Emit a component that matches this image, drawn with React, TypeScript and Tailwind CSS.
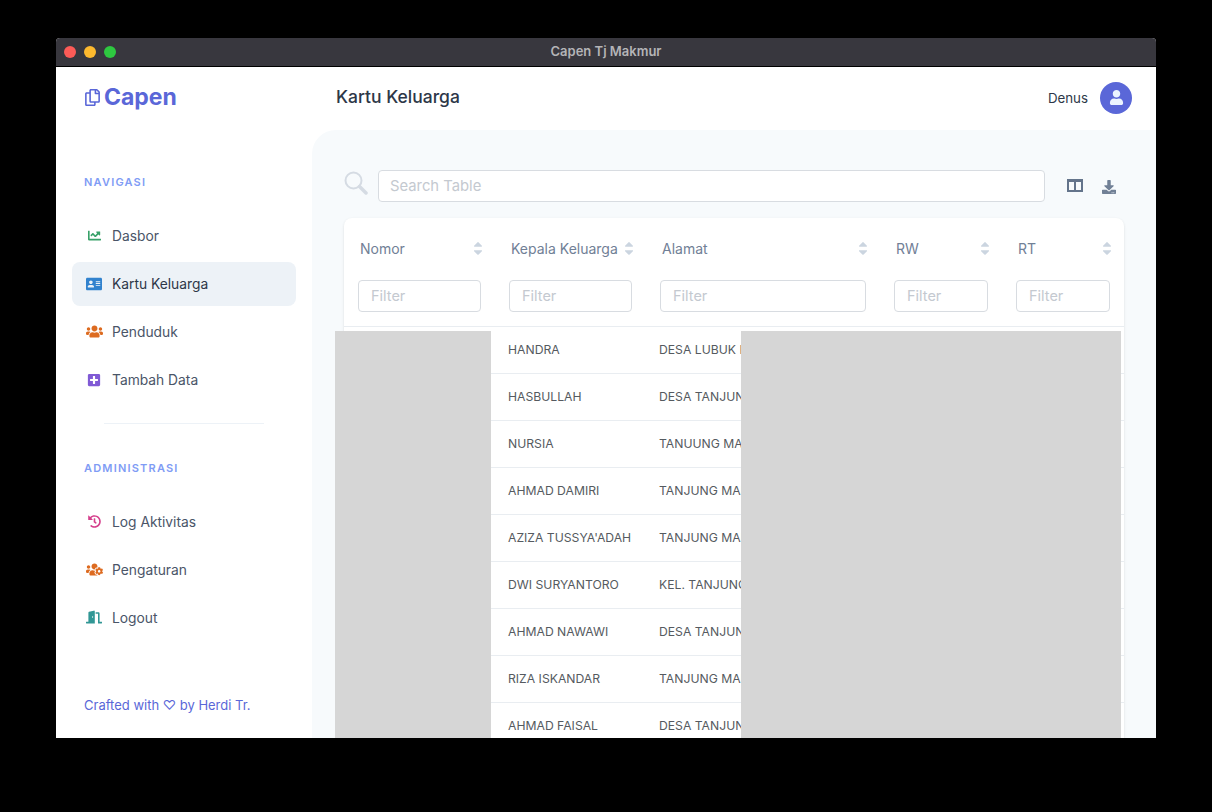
import React from 'react';
import {
  FaAddressCard,
  FaCaretDown,
  FaCaretUp,
  FaChartLine,
  FaDoorOpen,
  FaDownload,
  FaHistory,
  FaPlusSquare,
  FaRegCopy,
  FaUser,
  FaUsers,
  FaUsersCog,
} from 'react-icons/fa';

const font = { fontFamily: 'Inter, sans-serif' };

const mainNav = [
  { label: 'Dasbor', icon: <FaChartLine size={13} className="text-[#38a169]" /> },
  { label: 'Kartu Keluarga', icon: <FaAddressCard size={16} className="text-[#3182ce]" />, active: true },
  { label: 'Penduduk', icon: <FaUsers size={17} className="text-[#dd6b20]" /> },
  { label: 'Tambah Data', icon: <FaPlusSquare size={14} className="text-[#805ad5]" /> },
];

const adminNav = [
  { label: 'Log Aktivitas', icon: <FaHistory size={13} className="text-[#d53f8c]" /> },
  { label: 'Pengaturan', icon: <FaUsersCog size={17} className="text-[#dd6b20]" /> },
  { label: 'Logout', icon: <FaDoorOpen size={16} className="text-[#319795]" /> },
];

const columns = [
  { label: 'Nomor', width: 'w-[151px]' },
  { label: 'Kepala Keluarga', width: 'w-[151px]' },
  { label: 'Alamat', width: 'w-[234px]' },
  { label: 'RW', width: 'w-[122px]' },
  { label: 'RT', width: 'w-[122px]' },
];

const rows = [
  ['HANDRA', 'DESA LUBUK KAMPUNG'],
  ['HASBULLAH', 'DESA TANJUNG MAKMUR'],
  ['NURSIA', 'TANUUNG MAKMUR'],
  ['AHMAD DAMIRI', 'TANJUNG MAKMUR'],
  ["AZIZA TUSSYA'ADAH", 'TANJUNG MAKMUR'],
  ['DWI SURYANTORO', 'KEL. TANJUNG MAKMUR'],
  ['AHMAD NAWAWI', 'DESA TANJUNG MAKMUR'],
  ['RIZA ISKANDAR', 'TANJUNG MAKMUR'],
  ['AHMAD FAISAL', 'DESA TANJUNG MAKMUR'],
];

const NavItem: React.FC<{ label: string; icon: React.ReactNode; active?: boolean }> = ({ label, icon, active }) => (
  <div className={`flex h-11 items-center rounded-lg pl-3 ${active ? 'bg-[#edf2f7] text-[#2d3748]' : 'text-[#4a5568]'}`}>
    <span className="flex w-5 shrink-0 items-center justify-center">{icon}</span>
    <span className="ml-2 pt-[2px] text-[13.8px]">{label}</span>
  </div>
);

const SortCaret = () => (
  <span className="-mr-[6px] flex flex-col items-center text-[#cbd5e0]">
    <FaCaretUp size={14} className="-mb-[6px]" />
    <FaCaretDown size={14} />
  </span>
);

export default function App() {
  return (
    <div className="flex h-[812px] w-[1212px] bg-black pl-14 pt-[38px]" style={font}>
      <div className="relative h-[700px] w-[1100px] overflow-hidden rounded-t-[4px] bg-white">
        <div className="relative flex h-[29px] items-center justify-center border-b border-black bg-[#38373e]">
          <div className="absolute left-2 flex gap-2">
            <span className="h-3 w-3 rounded-full bg-[#fc5b57]" />
            <span className="h-3 w-3 rounded-full bg-[#fdb92e]" />
            <span className="h-3 w-3 rounded-full bg-[#2ec840]" />
          </div>
          <span className="text-[13px] font-semibold text-[#b4b4b7]">Capen Tj Makmur</span>
        </div>

        <div className="flex h-[671px]">
          <aside className="flex w-64 shrink-0 flex-col px-4">
            <div className="flex h-[63px] items-center pb-[2px] pl-3 text-[#5a67d8]">
              <FaRegCopy size={17} />
              <span className="ml-[3px] text-[23px] font-bold">Capen</span>
            </div>
            <p className="mt-[44px] pl-3 text-[11px] font-semibold tracking-[1.2px] text-[#7f9cf5]">NAVIGASI</p>
            <nav className="mt-[23px] flex flex-col gap-1">
              {mainNav.map((item) => (
                <NavItem key={item.label} {...item} />
              ))}
            </nav>
            <div className="mx-8 mt-[21px] border-t border-[#edf2f7]" />
            <p className="mt-[36px] pl-3 text-[11px] font-semibold tracking-[1.2px] text-[#7f9cf5]">ADMINISTRASI</p>
            <nav className="mt-[23px] flex flex-col gap-1">
              {adminNav.map((item) => (
                <NavItem key={item.label} {...item} />
              ))}
            </nav>
            <p className="mt-[57px] pl-3 text-[13px] text-[#5a67d8]">Crafted with ♡ by Herdi Tr.</p>
          </aside>

          <div className="flex min-w-0 flex-1 flex-col">
            <header className="flex h-[63px] shrink-0 items-center justify-between pb-[2px] pl-6 pr-6">
              <h1 className="text-[17.5px] font-medium text-[#2d3748]">Kartu Keluarga</h1>
              <div className="flex items-center gap-3">
                <span className="pt-[2px] text-[13.3px] text-[#2d3748]">Denus</span>
                <span className="flex h-8 w-8 items-center justify-center rounded-full bg-[#5a67d8] text-[#ebf4ff]">
                  <FaUser size={15} />
                </span>
              </div>
            </header>

            <main className="flex-1 overflow-hidden rounded-tl-[24px] bg-[#f7fafc] pl-8 pr-8 pt-10">
              <div className="flex h-8 items-center">
                <svg width="24" height="24" viewBox="0 0 24 24" fill="none" className="-mt-[6px] text-[#d5dbe3]">
                  <circle cx="9.5" cy="9.5" r="8" stroke="currentColor" strokeWidth="2" />
                  <path d="M15.5 15.5L22 22" stroke="currentColor" strokeWidth="3.5" strokeLinecap="round" />
                </svg>
                <div className="ml-[10px] flex h-8 w-[667px] items-center rounded border border-[#d8dce1] bg-white pl-[11px] text-[14.8px] text-[#c4c9d0]">
                  Search Table
                </div>
                <svg width="16" height="13" viewBox="0 0 16 13" className="ml-[22px] -mt-[2px] text-[#64748b]">
                  <path fill="currentColor" fillRule="evenodd" d="M0 0h16v13H0zM2 3v8h5V3zM9 3v8h5V3z" />
                </svg>
                <FaDownload size={14} className="ml-[19px] mt-[1px] text-[#718096]" />
              </div>

              <div className="mt-4 w-[780px] rounded-t-lg bg-white shadow-sm">
                <div className="flex h-[109px] border-b border-[#e9edf1]">
                  {columns.map((col) => (
                    <div key={col.label} className={`${col.width} flex shrink-0 flex-col px-[14px]`}>
                      <div className="flex h-[62px] items-center justify-between px-[2px] pb-[2px]">
                        <span className="text-[14px] text-[#718096]">{col.label}</span>
                        <SortCaret />
                      </div>
                      <div className="flex h-8 items-center rounded border border-[#d8dce1] pl-3 text-[14.5px] text-[#c4c9d0]">
                        Filter
                      </div>
                    </div>
                  ))}
                </div>
                {rows.map(([name, address]) => (
                  <div key={name} className="flex h-[47px] items-center border-b border-[#e9edf1] text-[12.2px] text-[#555a60]">
                    <span className="w-[151px] shrink-0" />
                    <span className="w-[151px] shrink-0 whitespace-nowrap pl-[13px]">{name}</span>
                    <span className="whitespace-nowrap pl-[13px]">{address}</span>
                  </div>
                ))}
              </div>
            </main>
          </div>
        </div>

        {/* redacted blocks over the table */}
        <div className="absolute left-[279px] top-[293px] h-[407px] w-[156px] bg-[#d6d6d6]" />
        <div className="absolute left-[685px] top-[293px] h-[407px] w-[380px] bg-[#d6d6d6]" />
      </div>
    </div>
  );
}
